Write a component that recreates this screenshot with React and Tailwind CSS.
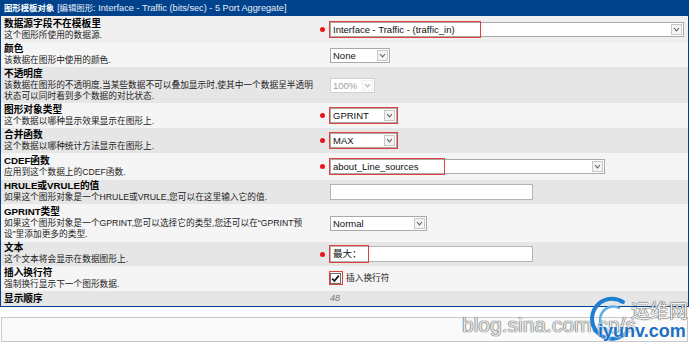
import React from "react";

const FONT = "font-['Liberation_Sans','Noto_Sans_CJK_SC',sans-serif]";

function Chevron() {
  return (
    <svg width="7" height="5" viewBox="0 0 7 5">
      <polyline points="1,1 3.5,3.8 6,1" fill="none" stroke="#606060" strokeWidth="1.1" />
    </svg>
  );
}

function Select({ w, value, disabled, redW, redFull }) {
  return (
    <div
      className={`relative h-[15px] flex items-center justify-between bg-white border ${
        disabled ? "border-[#d0d0d0]" : "border-[#a9a9a9]"
      }`}
      style={{ width: w }}
    >
      <span
        className={`pl-[2px] text-[9.5px] leading-[13px] whitespace-nowrap ${
          disabled ? "text-[#a0a0a0]" : "text-[#111]"
        }`}
      >
        {value}
      </span>
      <span
        className={`mr-px w-[11px] h-[11px] flex items-center justify-center border ${
          disabled ? "border-[#e0e0e0] bg-[#fafafa] opacity-50" : "border-[#c8c8c8] bg-[#f4f4f4]"
        }`}
      >
        <Chevron />
      </span>
      {redFull && (
        <span className="absolute left-[-2px] top-[-2px] right-[-2px] bottom-[-2px] border-[1.5px] border-[#e0403f]" />
      )}
      {redW && (
        <span
          className="absolute left-[-2px] top-[-2px] bottom-[-2px] border-[1.5px] border-[#e0403f]"
          style={{ width: redW }}
        />
      )}
    </div>
  );
}

function TextInput({ w, value, redW }) {
  return (
    <div className="relative h-[16px] bg-white border border-[#b4b4b4] flex items-center" style={{ width: w }}>
      <span className="pl-[2px] text-[9.5px] text-[#111] whitespace-nowrap">{value}</span>
      {redW && (
        <span
          className="absolute left-[-2px] top-[-2px] bottom-[-2px] border-[1.5px] border-[#e0403f]"
          style={{ width: redW }}
        />
      )}
    </div>
  );
}

function Dot() {
  return <span className="block w-[5px] h-[5px] rounded-full bg-[#e8141a]" />;
}

function Row({ bg, h, title, desc, req, children }) {
  return (
    <div className={`flex items-center ${bg}`} style={{ height: h }}>
      <div className="w-[318px] pl-[3px] flex flex-col justify-center">
        <div className="text-[9.7px] leading-[12px] font-bold text-black whitespace-nowrap">{title}</div>
        {desc &&
          desc.map((d, i) => (
            <div key={i} className="text-[8.7px] leading-[11.5px] text-[#222] whitespace-nowrap">
              {d}
            </div>
          ))}
      </div>
      <div className="w-[11px] pl-[1px] flex items-center">{req && <Dot />}</div>
      <div className="flex items-center">{children}</div>
    </div>
  );
}

const ODD = "bg-[#e6e6e6]";
const EVEN = "bg-[#f5f5f5]";

export default function App() {
  return (
    <div className={`relative w-[690px] h-[344px] bg-white overflow-hidden ${FONT}`}>
      <div className="w-[689px] border border-[#00438c]">
        <div className="h-[15px] bg-[#00438c] flex items-center pl-[3px] text-white whitespace-nowrap">
          <span className="text-[8.4px] font-bold">图形模板对象</span>
          <span className="text-[9.2px] ml-[3px] text-[#e8eef8]">
            <span className="text-[8.4px]">[编辑图形</span>: Interface - Traffic (bits/sec) - 5 Port Aggregate]
          </span>
        </div>

        <Row bg="bg-[#efefef]" h={27} title="数据源字段不在模板里" desc={["这个图形所使用的数据源."]} req>
          <Select w={354} value="Interface - Traffic - (traffic_in)" redW={152} />
        </Row>
        <Row bg={EVEN} h={24} title="颜色" desc={["该数据在图形中使用的颜色."]}>
          <Select w={60} value="None" />
        </Row>
        <Row
          bg={ODD}
          h={36}
          title="不透明度"
          desc={["该数据在图形的不透明度,当某些数据不可以叠加显示时,使其中一个数据呈半透明", "状态可以同时看到多个数据的对比状态."]}
        >
          <Select w={45} value="100%" disabled />
        </Row>
        <Row bg={EVEN} h={25} title="图形对象类型" desc={["这个数据以哪种显示效果显示在图形上."]} req>
          <Select w={67} value="GPRINT" redFull />
        </Row>
        <Row bg={ODD} h={25} title="合并函数" desc={["这个数据以哪种统计方法显示在图形上."]} req>
          <Select w={67} value="MAX" redFull />
        </Row>
        <Row bg={EVEN} h={27} title="CDEF函数" desc={["应用到这个数据上的CDEF函数."]} req>
          <Select w={275} value="about_Line_sources" redW={116} />
        </Row>
        <Row bg={ODD} h={24} title="HRULE或VRULE的值" desc={["如果这个图形对象是一个HRULE或VRULE,您可以在这里输入它的值."]}>
          <TextInput w={203} value="" />
        </Row>
        <Row
          bg={EVEN}
          h={38}
          title="GPRINT类型"
          desc={["如果这个图形对象是一个GPRINT,您可以选择它的类型,您还可以在“GPRINT预", "设”里添加更多的类型."]}
        >
          <Select w={97} value="Normal" />
        </Row>
        <Row bg={ODD} h={24} title="文本" desc={["这个文本将会显示在数据图形上."]} req>
          <TextInput w={203} value="最大：" redW={40} />
        </Row>
        <Row bg={EVEN} h={25} title="插入换行符" desc={["强制换行显示下一个图形数据."]}>
          <div className="flex items-center">
            <div className="relative w-[11px] h-[11px] bg-white border border-[#6f6f6f] flex items-center justify-center">
              <svg width="9" height="9" viewBox="0 0 9 9">
                <path d="M1.2 4.6 L3.4 7 L7.8 1.6" fill="none" stroke="#111" strokeWidth="1.7" />
              </svg>
              <span className="absolute left-[-2.5px] top-[-2.5px] right-[-2.5px] bottom-[-2.5px] border-[1.5px] border-[#e0403f]" />
            </div>
            <span className="ml-[5px] text-[8.7px] text-[#222]">插入换行符</span>
          </div>
        </Row>
        <div className={`flex items-center ${ODD} h-[15px]`}>
          <div className="w-[318px] pl-[3px] text-[9.7px] leading-[12px] font-bold text-black">显示顺序</div>
          <div className="w-[11px]" />
          <span className="text-[9px] italic text-[#777]">48</span>
        </div>
      </div>

      <div className="mt-[10px] ml-[1px] w-[687px] h-[25px] border border-[#c8c8c8] bg-[#fafafa]" />

      {/* watermark */}
      <div className="absolute left-[462px] top-[312px] text-[21px] leading-[26px] text-[#e4e4e4] font-['Liberation_Sans',sans-serif] whitespace-nowrap [text-shadow:0_0_1px_#444,0_0_1px_#444]">
        blog.sina.com.cn/s
      </div>
      <svg className="absolute left-[587px] top-[294px]" width="50" height="50" viewBox="0 0 50 50">
        <path d="M36 8 A20 20 0 1 0 40 38" fill="none" stroke="#1e7fd0" strokeWidth="4" strokeLinecap="round" />
        <path d="M32 14 A13 13 0 1 0 36 34" fill="none" stroke="#5fb0ea" strokeWidth="2.5" strokeLinecap="round" />
      </svg>
      <div className="absolute left-[631px] top-[298px] text-[19px] leading-[24px] text-[#f2f2f2] font-['Noto_Sans_CJK_SC',sans-serif] [text-shadow:0_0_1px_#333,0_0_1px_#333]">
        运维网
      </div>
      <div className="absolute left-[598px] top-[320px] text-[18px] leading-[22px] font-bold text-[#1f6fc0] font-['Liberation_Sans',sans-serif] [text-shadow:0_0_2px_#fff,0_0_2px_#fff]">
        iyunv.com
      </div>
    </div>
  );
}
